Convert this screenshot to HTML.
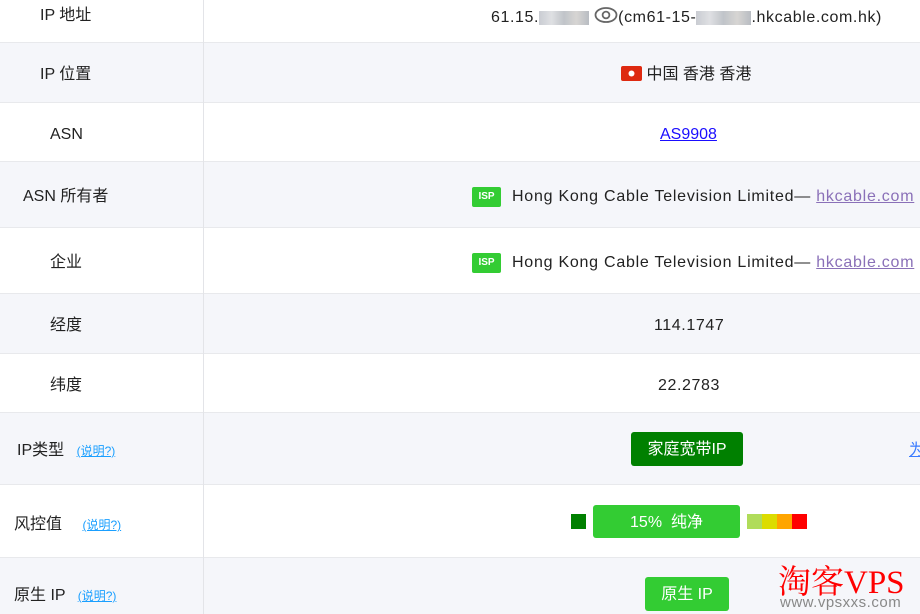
<!DOCTYPE html>
<html><head><meta charset="utf-8"><style>
body{margin:0;width:920px;height:614px;overflow:hidden;background:#fff;font-family:"Liberation Sans","Noto Sans CJK SC",sans-serif;font-size:16px;color:#222;position:relative}
.r{position:absolute;left:0;width:920px;border-bottom:1px solid #e8e9ec}
.g{background:#f5f6fa}
.vl{position:absolute;left:203px;top:0;width:1px;height:614px;background:#e3e4e8}
.t{position:absolute;white-space:nowrap;line-height:20px;margin-top:2px}
.q{font-size:12px;color:#1a9fff;text-decoration:underline}
.isp{display:inline-block;background:#33cc33;color:#fff;font-size:10px;font-weight:bold;width:29px;height:20px;line-height:20px;text-align:center;border-radius:2px;vertical-align:middle;margin-right:11px;letter-spacing:0}
.lnk{color:#8a70b8;text-decoration:underline}
.blur{display:inline-block;height:14px;background:linear-gradient(90deg,#c9ccd2,#dfe0e3,#c0c4c9,#d7d5d3,#b8bcc2);vertical-align:middle}
.w{letter-spacing:0.75px}
</style></head><body>
<div class="r" style="top:0;height:42px"></div>
<div class="r g" style="top:43px;height:59px"></div>
<div class="r" style="top:103px;height:58px"></div>
<div class="r g" style="top:162px;height:65px"></div>
<div class="r" style="top:228px;height:65px"></div>
<div class="r g" style="top:294px;height:59px"></div>
<div class="r" style="top:354px;height:58px"></div>
<div class="r g" style="top:413px;height:71px"></div>
<div class="r" style="top:485px;height:72px"></div>
<div class="r g" style="top:558px;height:56px;border:0"></div>
<div class="vl"></div>

<div class="t" style="left:40px;top:4px">IP 地址</div>
<div class="t" style="left:491px;top:4px;letter-spacing:0.6px">61.15.<span class="blur" style="width:50px"></span> <svg width="24" height="18" viewBox="0 0 24 18" style="vertical-align:-2px"><ellipse cx="12" cy="9" rx="10.5" ry="7" fill="none" stroke="#666" stroke-width="1.8"/><circle cx="12" cy="9" r="3.4" fill="none" stroke="#666" stroke-width="1.8"/></svg>(cm61-15-<span class="blur" style="width:55px"></span>.hkcable.com.hk)</div>

<div class="t" style="left:40px;top:63px">IP 位置</div>
<div class="t" style="left:621px;top:63px"><svg width="21" height="15" viewBox="0 0 21 15" style="vertical-align:-2px"><rect width="21" height="15" rx="2" fill="#de2910"/><circle cx="10.5" cy="7.5" r="3" fill="#fff"/></svg> 中国 香港 香港</div>

<div class="t" style="left:50px;top:123px">ASN</div>
<div class="t" style="left:660px;top:123px;color:#1a0dff;text-decoration:underline">AS9908</div>

<div class="t" style="left:23px;top:185px">ASN 所有者</div>
<div class="t w" style="left:472px;top:185px"><span class="isp">ISP</span>Hong Kong Cable Television Limited— <span class="lnk">hkcable.com</span></div>

<div class="t" style="left:50px;top:251px">企业</div>
<div class="t w" style="left:472px;top:251px"><span class="isp">ISP</span>Hong Kong Cable Television Limited— <span class="lnk">hkcable.com</span></div>

<div class="t" style="left:50px;top:314px">经度</div>
<div class="t" style="left:654px;top:314px;letter-spacing:0.6px">114.1747</div>
<div class="t" style="left:50px;top:374px">纬度</div>
<div class="t" style="left:658px;top:374px;letter-spacing:0.6px">22.2783</div>

<div class="t" style="left:17px;top:439px">IP类型 <span class="q" style="margin-left:8px">(说明?)</span></div>
<div style="position:absolute;left:631px;top:432px;width:112px;height:34px;background:#008000;border-radius:3px;color:#fff;text-align:center;line-height:36px">家庭宽带IP</div>
<div class="t" style="left:909px;top:439px;color:#3a7bff;text-decoration:underline">为</div>

<div class="t" style="left:14px;top:513px">风控值 <span class="q" style="margin-left:16px">(说明?)</span></div>
<div style="position:absolute;left:571px;top:514px;width:15px;height:15px;background:#008000"></div>
<div style="position:absolute;left:593px;top:505px;width:147px;height:33px;background:#33cc33;border-radius:3px;color:#fff;text-align:center;line-height:35px">15% &nbsp;纯净</div>
<div style="position:absolute;left:747px;top:514px;width:15px;height:15px;background:#b0dc5a"></div>
<div style="position:absolute;left:762px;top:514px;width:15px;height:15px;background:#dcdc00"></div>
<div style="position:absolute;left:777px;top:514px;width:15px;height:15px;background:#ffa500"></div>
<div style="position:absolute;left:792px;top:514px;width:15px;height:15px;background:#ff0000"></div>

<div class="t" style="left:14px;top:584px">原生 IP <span class="q" style="margin-left:8px">(说明?)</span></div>
<div style="position:absolute;left:645px;top:577px;width:84px;height:34px;background:#33cc33;border-radius:3px;color:#fff;text-align:center;line-height:36px">原生 IP</div>

<div class="t" style="left:778px;top:563px;font-family:'Liberation Serif','Noto Serif CJK SC',serif;font-size:33px;line-height:36px;color:#ff0000">淘客VPS</div>
<div class="t" style="left:780px;top:591px;font-size:15px;color:#888;letter-spacing:0.5px">www.vpsxxs.com</div>
</body></html>
